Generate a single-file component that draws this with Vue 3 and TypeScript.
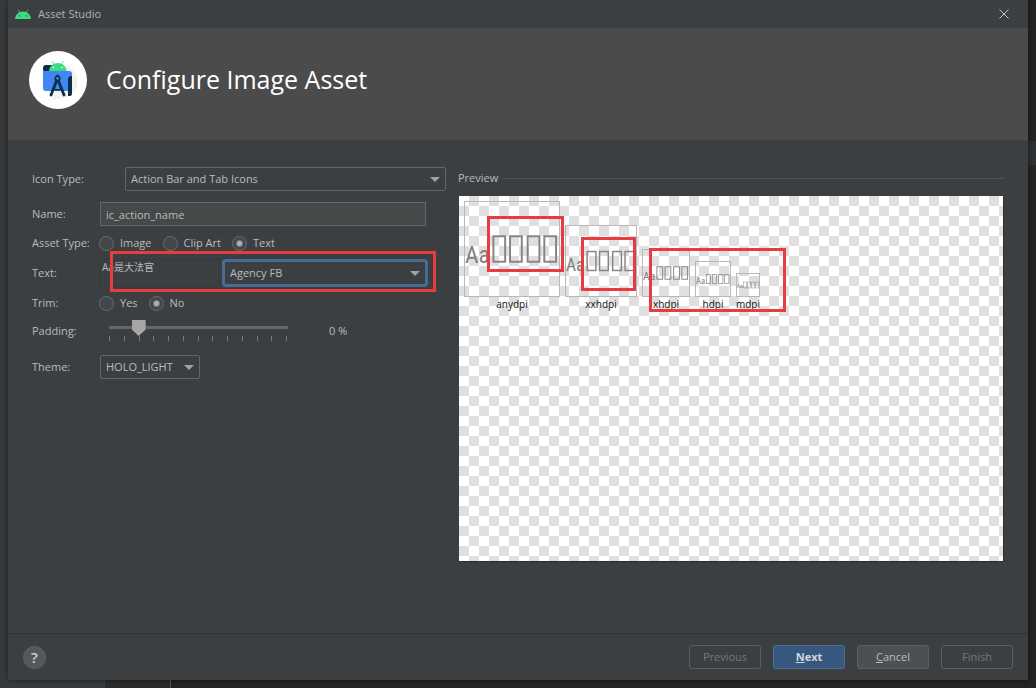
<script setup lang="ts">
import { ref } from 'vue'

interface Density {
  name: string
  size: string
}

const iconType = ref('Action Bar and Tab Icons')
const assetName = ref('ic_action_name')
const assetType = ref('Text')
const assetTypes = ['Image', 'Clip Art', 'Text']
const text = ref('Aa是大法官')
const font = ref('Agency FB')
const trim = ref('No')
const trimOptions = ['Yes', 'No']
const padding = ref(0)
const theme = ref('HOLO_LIGHT')

const densities: Density[] = [
  { name: 'anydpi', size: 'any' },
  { name: 'xxhdpi', size: 'xxh' },
  { name: 'xhdpi', size: 'xh' },
  { name: 'hdpi', size: 'h' },
  { name: 'mdpi', size: 'm' },
]
const boxes = [29, 46, 64, 81]
</script>

<template>
  <div class="backdrop">
    <main class="dialog">
      <div class="titlebar">
        <svg class="robot" viewBox="0 0 16 10" aria-hidden="true">
          <path d="M0 10C.3 7 2 4.600 4.200 3.300L2.700.7l.5-.3 1.600 2.700a8.300 8.300 0 0 1 6.400 0L12.800.4l.5.3-1.500 2.600C14 4.600 15.700 7 16 10Z" fill="#3ddc84" />
          <circle cx="4.500" cy="7" r=".8" fill="#2b6b4a" />
          <circle cx="11.500" cy="7" r=".8" fill="#2b6b4a" />
        </svg>
        <span class="caption">Asset Studio</span>
        <button class="close" type="button" aria-label="Close">
          <svg viewBox="0 0 10 10"><path d="M.5.5l9 9M9.500.5l-9 9" stroke="#c4c6c7" stroke-width="1" /></svg>
        </button>
      </div>

      <header class="header">
        <svg class="logo" viewBox="0 0 58 58" aria-hidden="true">
          <circle cx="29" cy="29" r="29" fill="#fff" />
          <path d="M38 13l10 11v12l-7 9-18 4 10-25z" fill="#f1f1f1" />
          <path d="M14 20v-3q0-3 3-3h7v8H14z" fill="#073042" />
          <path d="M14 18q0 2 3 2h23q3 0 3 3v13q0 4-4 4H17q-3 0-3-3z" fill="#4285f4" />
          <path d="M20 20a9 9 0 0 1 4.300-6.900L22.700 10l.6-.3 1.700 3a9.500 9.500 0 0 1 7.500 0l1.700-3 .6.3-1.600 3.100A9 9 0 0 1 37.500 20z" fill="#3ddc84" />
          <circle cx="24.500" cy="16.500" r=".8" fill="#fff" />
          <circle cx="33" cy="16.500" r=".8" fill="#fff" />
          <path d="M43 25v17q0 3-2 3h-2V28q0-3 4-3z" fill="#073042" />
          <g fill="none" stroke="#073042">
            <circle cx="28.500" cy="27.500" r="2.200" stroke-width="1.600" />
            <path d="M28.500 23.500v2" stroke-width="1.600" />
            <path d="M27.500 30L22 44M29.500 30L35 44" stroke-width="2.800" stroke-linecap="round" />
            <path d="M24.500 38q4 2 8 0" stroke-width="1.500" />
          </g>
        </svg>
        <h1>Configure Image Asset</h1>
      </header>

      <div class="body">
        <form class="form" @submit.prevent>
          <div class="row icon-type">
            <label class="label wide" for="icon-type">Icon Type:</label>
            <div class="select grow">
              <select id="icon-type" v-model="iconType">
                <option>Action Bar and Tab Icons</option>
              </select>
              <i class="arrow"></i>
            </div>
          </div>

          <div class="row inset">
            <label class="label" for="name">Name:</label>
            <input id="name" v-model="assetName" class="field grow" type="text" />
          </div>

          <div class="row" role="radiogroup" aria-labelledby="asset-type">
            <span id="asset-type" class="label">Asset Type:</span>
            <div class="radios">
              <label v-for="t in assetTypes" :key="t" class="radio">
                <input v-model="assetType" type="radio" name="asset-type" :value="t" />{{ t }}
              </label>
            </div>
          </div>

          <div class="row text-row">
            <label class="label" for="text">Text:</label>
            <textarea id="text" v-model="text" class="area" spellcheck="false"></textarea>
            <div class="select grow focused">
              <select v-model="font" aria-label="Font">
                <option>Agency FB</option>
              </select>
              <i class="arrow"></i>
            </div>
            <div class="mark mark-form"></div>
          </div>

          <div class="row trim-row" role="radiogroup" aria-labelledby="trim">
            <span id="trim" class="label">Trim:</span>
            <div class="radios">
              <label v-for="t in trimOptions" :key="t" class="radio">
                <input v-model="trim" type="radio" name="trim" :value="t" />{{ t }}
              </label>
            </div>
          </div>

          <div class="row padding-row">
            <label class="label" for="padding">Padding:</label>
            <div class="slider">
              <input id="padding" v-model.number="padding" type="range" min="-10" max="50" step="5" />
              <div class="ticks"><i v-for="n in 13" :key="n"></i></div>
            </div>
            <output class="percent" for="padding">{{ padding }} %</output>
          </div>

          <div class="row">
            <label class="label" for="theme">Theme:</label>
            <div class="select theme">
              <select id="theme" v-model="theme">
                <option>HOLO_LIGHT</option>
                <option>HOLO_DARK</option>
              </select>
              <i class="arrow"></i>
            </div>
          </div>
        </form>

        <section class="preview">
          <h2>Preview</h2>
          <div class="board">
            <figure v-for="d in densities" :key="d.name" :class="['tile', d.size]">
              <svg viewBox="0 0 96 96" aria-hidden="true">
                <text x="0" y="62" class="glyphs">Aa</text>
                <rect v-for="x in boxes" :key="x" :x="x" y="35" width="12" height="26" class="glyph-box" />
              </svg>
              <figcaption>{{ d.name }}</figcaption>
            </figure>
            <div class="mark mark-any"></div>
            <div class="mark mark-xxh"></div>
            <div class="mark mark-rest"></div>
          </div>
        </section>
      </div>

      <footer class="footer">
        <button class="help" type="button" aria-label="Help">?</button>
        <button class="btn" type="button" disabled>Previous</button>
        <button class="btn primary" type="button"><u>N</u>ext</button>
        <button class="btn solid" type="button"><u>C</u>ancel</button>
        <button class="btn" type="button" disabled>Finish</button>
      </footer>
    </main>
  </div>
</template>

<style>
body {
  background: #222;
}
</style>

<style scoped>
* {
  box-sizing: border-box;
}

.backdrop {
  min-height: 100vh;
  display: flex;
  padding: 0 8px 8px;
  overflow: hidden;
  background:
    linear-gradient(#37393b, #37393b) 0 0 / 105px 100% no-repeat,
    linear-gradient(#2b2b2b, #2b2b2b) 105px 0 / 65px 100% no-repeat,
    linear-gradient(#555, #555) 170px 0 / 1px 100% no-repeat,
    linear-gradient(#2e3032, #2e3032) 100% 141px / 8px 24px no-repeat,
    #242424;
  font-family: "Open Sans", "Noto Sans", "Noto Sans CJK SC", sans-serif;
  font-size: 11px;
  line-height: 16px;
  color: #bbb;
}

input,
select,
textarea,
button {
  font: inherit;
  color: inherit;
  margin: 0;
}

.dialog {
  flex: 1;
  min-width: 0;
  display: flex;
  flex-direction: column;
  background: #3c3f41;
  box-shadow: 0 0 5px rgba(0, 0, 0, 0.5);
}

.titlebar {
  display: flex;
  align-items: center;
  height: 28px;
  padding: 0 19px 0 7px;
}

.robot {
  width: 16px;
  height: 10px;
}

.caption {
  margin-left: 7px;
  color: #b0b2b3;
}

.close {
  margin-left: auto;
  padding: 0;
  border: 0;
  background: none;
  display: flex;
}

.close svg {
  width: 10px;
  height: 10px;
}

.header {
  display: flex;
  align-items: center;
  gap: 19px;
  height: 112px;
  padding: 0 21px 8px;
  background: #4b4b4b;
}

.logo {
  width: 58px;
  height: 58px;
}

h1 {
  margin: 0;
  padding-bottom: 2px;
  font-size: 25px;
  line-height: 32px;
  font-weight: 400;
  color: #fff;
}

.body {
  flex: 1;
  display: grid;
  grid-template-columns: 414fr 546fr;
  gap: 12px;
  padding: 27px 24px 72px;
}

.row {
  display: flex;
  align-items: center;
  margin-bottom: 8px;
}

.icon-type {
  margin-bottom: 11px;
}

.inset {
  padding-right: 20px;
  margin-bottom: 9px;
}

.trim-row {
  margin-bottom: 9px;
}

.label {
  flex: none;
  width: 68px;
}

.label.wide {
  width: 93px;
}

.grow {
  flex: 1;
  min-width: 0;
}

.select {
  display: grid;
  align-items: center;
}

.select > * {
  grid-area: 1 / 1;
}

.select select {
  appearance: none;
  width: 100%;
  height: 24px;
  padding: 0 24px 0 5px;
  border: 1px solid #646668;
  border-radius: 2px;
  background: #3c3f41;
  outline: none;
}

.arrow {
  justify-self: end;
  margin-right: 6px;
  border: 5px solid transparent;
  border-top-color: #a0a2a4;
  border-bottom: 0;
  pointer-events: none;
}

.focused select {
  height: 28px;
  border: 3px solid #466d94;
  border-radius: 4px;
}

.focused .arrow {
  margin-right: 8px;
}

.theme {
  width: 100px;
}

.field {
  height: 24px;
  padding: 0 5px;
  border: 1px solid #646668;
  border-radius: 0;
  background: #45494a;
  outline: none;
}

.radios {
  display: flex;
  gap: 11px;
  margin-left: -1px;
}

.radio {
  display: flex;
  align-items: center;
  gap: 6px;
}

.radio input {
  appearance: none;
  width: 15px;
  height: 15px;
  border: 1px solid #6b6e70;
  border-radius: 50%;
  background: #43474a;
}

.radio input:checked {
  background: radial-gradient(circle, #adafb0 0 2px, #43474a 4px);
}

.text-row {
  position: relative;
  padding-right: 18px;
}

.area {
  width: 120px;
  height: 28px;
  margin-right: 2px;
  padding: 0 1px;
  border: 1px solid #36393b;
  background: transparent;
  font-size: 10px;
  line-height: 14px;
  resize: none;
  outline: none;
  overflow: hidden;
}

.mark {
  position: absolute;
  border: 3px solid #e93c40;
  pointer-events: none;
}

.mark-form {
  left: 78px;
  right: 10px;
  top: -8px;
  height: 41px;
}

.padding-row {
  margin-bottom: 13px;
}

.slider {
  width: 192px;
  margin-left: 2px;
  padding-bottom: 1px;
}

.slider input {
  appearance: none;
  display: block;
  width: 100%;
  height: 16px;
  background: linear-gradient(#646668, #646668) 50% 6px / 179px 3px no-repeat;
  outline: none;
}

.slider input::-webkit-slider-thumb {
  appearance: none;
  width: 14px;
  height: 16px;
  background: #a6a6a6;
  clip-path: polygon(0 0, 100% 0, 100% 60%, 50% 100%, 0 60%);
}

.ticks {
  display: flex;
  justify-content: space-between;
  padding: 0 7px;
}

.ticks i {
  width: 1px;
  height: 5px;
  background: #77797b;
}

.percent {
  margin-left: 35px;
}

.preview {
  display: flex;
  flex-direction: column;
  min-width: 0;
}

h2 {
  display: flex;
  align-items: center;
  gap: 5px;
  margin: 3px 0 10px;
  font-size: 11px;
  line-height: 16px;
  font-weight: 400;
}

h2::after {
  content: "";
  flex: 1;
  height: 1px;
  background: #515456;
}

.board {
  position: relative;
  flex: 1;
  display: flex;
  align-items: flex-start;
  gap: 5px;
  margin: 0 1px;
  padding: 5px;
  background: conic-gradient(#dfdfdf 25%, #fff 0 50%, #dfdfdf 0 75%, #fff 0) 0 0 / 20px 20px;
  box-shadow: 1px 1px 0 #2c2e30;
}

.tile {
  margin: 0;
  display: flex;
  flex-direction: column;
  align-items: center;
  justify-content: flex-end;
  height: 111px;
}

.tile svg {
  flex: none;
  width: 100%;
  aspect-ratio: 1;
  border: 1px solid #b8b8b8;
}

.any {
  width: 96px;
}

.xxh {
  width: 72px;
}

.xh {
  width: 48px;
}

.h {
  width: 36px;
}

.m {
  width: 24px;
}

.glyphs {
  font-family: "Roboto Condensed", "Open Sans Condensed", Lato, sans-serif;
  font-size: 24px;
  fill: #808080;
}

.glyph-box {
  fill: none;
  stroke: #858585;
  stroke-width: 2px;
}

figcaption {
  font-size: 10px;
  line-height: 15px;
  color: #111;
}

.mark-any {
  left: 28px;
  top: 20px;
  width: 77px;
  height: 56px;
}

.mark-xxh {
  left: 122px;
  top: 41px;
  width: 55px;
  height: 54px;
}

.mark-rest {
  left: 190px;
  top: 52px;
  width: 137px;
  height: 64px;
}

.footer {
  display: flex;
  align-items: center;
  gap: 12px;
  height: 47px;
  padding: 0 15px;
  border-top: 1px solid #303234;
}

.help {
  width: 23px;
  height: 23px;
  margin-right: auto;
  padding: 0;
  border: 1px solid #606366;
  border-radius: 50%;
  background: #55585a;
  color: #d0d0d0;
  font-size: 15px;
  line-height: 20px;
  font-weight: 600;
}

.btn {
  width: 72px;
  height: 24px;
  padding: 0;
  border: 1px solid #5c5f61;
  border-radius: 3px;
  background: transparent;
  color: #777;
}

.btn.primary {
  border-color: #4c708c;
  background: #365880;
  color: #cfd4da;
  font-weight: 700;
}

.btn.solid {
  border-color: #5e6060;
  background: #4c5052;
  color: #bbb;
}
</style>
